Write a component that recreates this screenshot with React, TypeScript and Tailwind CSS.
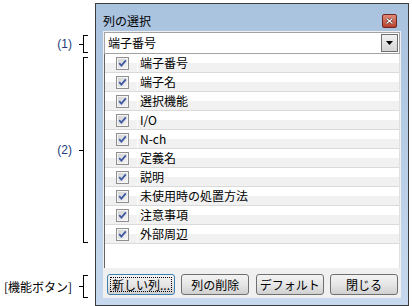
const items = [
  "端子番号",
  "端子名",
  "選択機能",
  "I/O",
  "N-ch",
  "定義名",
  "説明",
  "未使用時の処置方法",
  "注意事項",
  "外部周辺",
];

const Bracket = ({ label, className }: { label: string; className: string }) => (
  <div className={`flex items-center justify-end pr-[7px] ${className}`}>
    <span className="mr-[7px] whitespace-nowrap">{label}</span>
    <div className="w-[4px] h-px bg-black" />
    <div className="w-[5px] h-full border-l border-y border-black" />
  </div>
);

const CheckBox = () => (
  <svg width="13" height="13" viewBox="0 0 13 13">
    <defs>
      <linearGradient id="cb" x1="0" y1="0" x2="1" y2="1">
        <stop offset="0" stopColor="#d4d4d4" />
        <stop offset="1" stopColor="#f4f4f4" />
      </linearGradient>
    </defs>
    <rect x="0.5" y="0.5" width="12" height="12" fill="#f6f6f6" stroke="#8f8f8f" />
    <rect x="2" y="2" width="9" height="9" fill="url(#cb)" />
    <path d="M3.2 6.2 L5.4 8.6 L9.8 3.4" fill="none" stroke="#3f5aa0" strokeWidth="1.8" />
  </svg>
);

const Btn = ({ label, focus }: { label: string; focus?: boolean }) => (
  <button
    type="button"
    className={`w-[68px] h-[21px] rounded-[3px] border p-[2px] bg-linear-to-b from-[#f3f3f3] from-0% via-[#e6e6e6] via-50% to-[#d0d0d0] to-100% ${
      focus ? "border-[#3c7fb1]" : "border-[#707070]"
    }`}
  >
    <div
      className={`h-full flex items-center justify-center leading-none ${
        focus ? "border border-dotted border-black" : ""
      }`}
    >
      {label}
    </div>
  </button>
);

const App = () => {
  return (
    <div className="w-[412px] h-[306px] bg-white flex text-[12px] text-black font-['Noto_Sans_CJK_JP','Liberation_Sans',sans-serif] overflow-hidden">
      <div className="w-[95px] shrink-0 flex flex-col pt-[35px]">
        <Bracket label="(1)" className="h-[18px] text-[#243c7c] font-['Liberation_Sans',sans-serif]" />
        <Bracket label="(2)" className="mt-[4px] h-[186px] text-[#243c7c] font-['Liberation_Sans',sans-serif]" />
        <Bracket label="[機能ボタン]" className="mt-[32px] h-[23px]" />
      </div>

      <div className="mt-[3px] w-[314px] h-[303px] border border-[#3c3c3c] flex flex-col bg-linear-to-b from-[#a9c2de] to-[#c6d9ee]">
        <div className="h-[27px] pt-[6px] pl-[7px] pr-[11px] flex items-center">
          <span className="leading-none">列の選択</span>
          <button
            type="button"
            className="ml-auto w-[15px] h-[14px] rounded-[2px] border border-[#6e2a22] bg-linear-to-b from-[#e08a78] to-[#b8402e] flex items-center justify-center"
          >
            <svg width="7" height="6" viewBox="0 0 7 6">
              <path d="M0.5 0.5 L6.5 5.5 M6.5 0.5 L0.5 5.5" stroke="#3a1a14" strokeWidth="2.2" />
              <path d="M0.5 0.5 L6.5 5.5 M6.5 0.5 L0.5 5.5" stroke="#ffffff" strokeWidth="1.2" />
            </svg>
          </button>
        </div>

        <div className="mx-[7px] mb-[7px] flex-1 bg-[#f0f0f0] flex flex-col">
          <div className="mt-[1px] mx-[1px] h-[22px] border border-[#a3a3a3] bg-white flex items-center pl-[3px] pr-px">
            <span className="leading-none">端子番号</span>
            <div className="ml-auto w-[17px] h-[18px] border border-[#707070] bg-linear-to-b from-[#f2f2f2] to-[#d4d4d4] flex items-center justify-center">
              <svg width="7" height="4" viewBox="0 0 7 4">
                <path d="M0 0 H7 L3.5 4 Z" fill="#000" />
              </svg>
            </div>
          </div>

          <div className="mx-[1px] h-[214px] bg-white border-l border-[#646464] border-r-[#e0e0e0] border-r flex flex-col">
            {items.map((item) => (
              <div
                key={item}
                className="h-[19px] shrink-0 flex border-b border-[#dadada] bg-linear-to-b from-white from-50% to-[#f1f1f1] to-50%"
              >
                <div className="w-[33px] pl-[11px] flex items-center border-r border-white">
                  <CheckBox />
                </div>
                <div className="pl-[2px] flex items-center leading-none">{item}</div>
              </div>
            ))}
          </div>

          <div className="flex-1 pt-[6px] pl-[4px] pr-[3px] flex items-start justify-between">
            <Btn label="新しい列..." focus />
            <Btn label="列の削除" />
            <Btn label="デフォルト" />
            <Btn label="閉じる" />
          </div>
        </div>
      </div>
    </div>
  );
};

export default App;
